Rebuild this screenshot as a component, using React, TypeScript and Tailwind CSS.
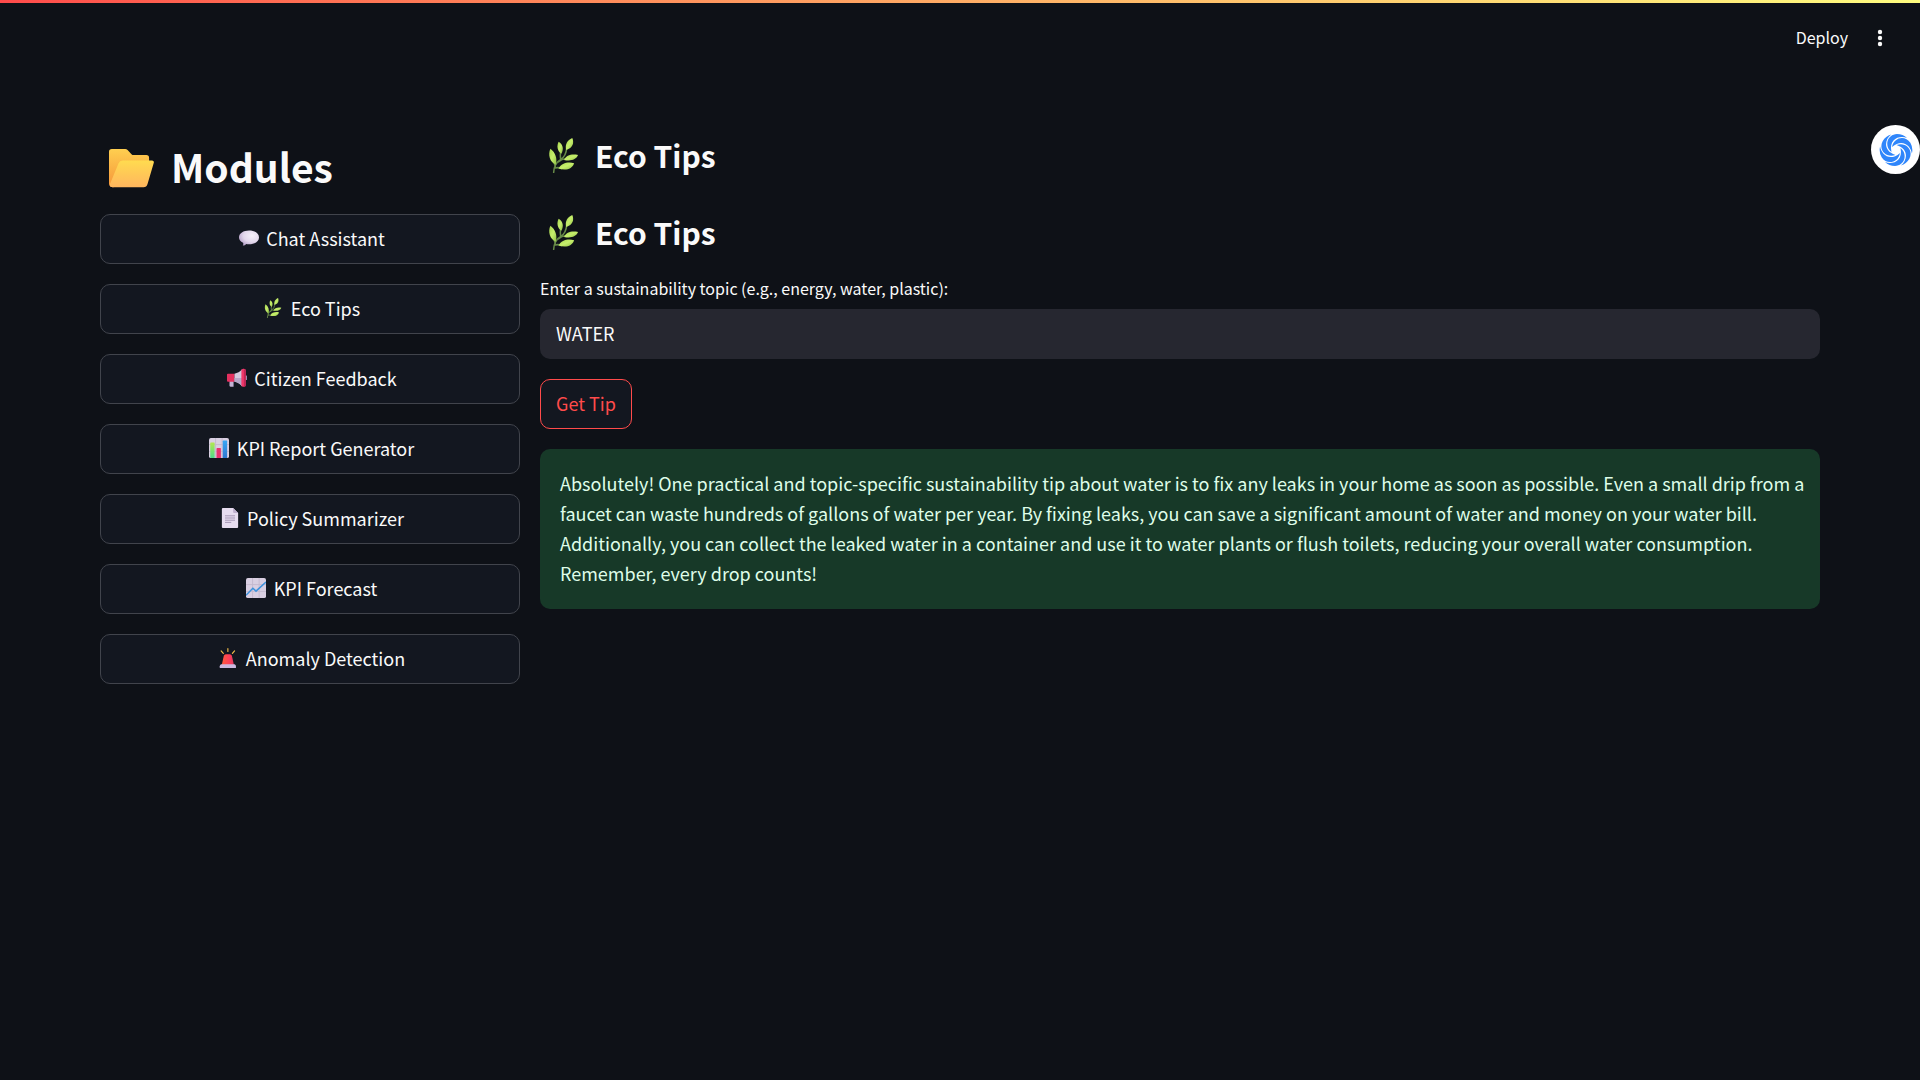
import { useState, type ReactNode } from "react";

function Svg({ className, children }: { className: string; children: ReactNode }) {
  return (
    <svg viewBox="0 0 32 32" className={className} aria-hidden="true">
      {children}
    </svg>
  );
}

function FolderIcon({ className = "size-5" }) {
  return (
    <Svg className={className}>
      <defs>
        <linearGradient id="folder-back" x1="0" y1="0" x2="0" y2="1">
          <stop offset="0" stopColor="#ffcf50" />
          <stop offset="1" stopColor="#f5963a" />
        </linearGradient>
        <linearGradient id="folder-front" x1="0" y1="0" x2="0" y2="1">
          <stop offset="0" stopColor="#ffdb4f" />
          <stop offset="1" stopColor="#ffb65e" />
        </linearGradient>
      </defs>
      <g transform="translate(0 1.500)">
        <path d="M0 4a2 2 0 0 1 2-2h9.500q1 0 1.700.7L16 5.700q.6.700 1.500.7H26.500a2 2 0 0 1 2 2V20L3 29.200Q0 29 0 26.500z" fill="url(#folder-back)" />
        <path d="M6.800 12.200Q7.600 10.200 9.700 10.200H30.600Q32.300 10.200 31.800 12L27.400 27Q26.700 29.300 24.600 29.300H2.500Q0 29.300.7 27z" fill="url(#folder-front)" />
      </g>
    </Svg>
  );
}

function LeafIcon({ className = "size-5" }) {
  return (
    <Svg className={className}>
      <defs>
        <linearGradient id="leaf-fill" x1="0" y1="0" x2="1" y2="1">
          <stop offset="0" stopColor="#a8d84f" />
          <stop offset="0.5" stopColor="#c6ee6c" />
          <stop offset="1" stopColor="#8fbf45" />
        </linearGradient>
      </defs>
      <path
        d="M7 31.500C7 27 9.500 21.500 13.500 19.500C17 17.500 18.500 14 19 9M13.500 19.500C13 17.500 13 15 13.500 12.500M8.500 26C8 24.500 7.500 23.500 7.500 22M11 22Q15 18.500 19 19M8.500 27.500Q11 26.500 14 28"
        fill="none"
        stroke="#678a48"
        strokeWidth="1.400"
        strokeLinecap="round"
      />
      <g fill="url(#leaf-fill)">
        <path d="M24 0C26 4.500 24.500 9 18.500 11C17 6 19.500 2 24 0z" />
        <path d="M11.500 3.500C15.500 6 16.500 10 14 14.500C10.500 12 9.500 8 11.500 3.500z" />
        <path d="M4 9.800C8.500 13 10.500 18.500 9 24.500C3.500 22 1.500 15.500 4 9.800z" />
        <path d="M29.300 15.500C27.500 20 22.500 21.300 16.500 20C18.500 15.500 23.500 14.300 29.300 15.500z" />
        <path d="M25.700 23C24 28.500 18 30 11.500 27.800C14 23 20 21.500 25.700 23z" />
      </g>
    </Svg>
  );
}

function ChatIcon({ className = "size-5" }) {
  return (
    <Svg className={className}>
      <defs>
        <radialGradient id="chat-fill" cx="0.65" cy="0.35" r="0.7">
          <stop offset="0" stopColor="#f6f1fa" />
          <stop offset="0.6" stopColor="#e3d8ec" />
          <stop offset="1" stopColor="#b9a5cb" />
        </radialGradient>
      </defs>
      <path d="M16 4C25 4 32 8.500 32 15S25 26 16 26Q13.500 26 11.500 25.600Q9.500 28.300 6 28Q7.500 26 6.500 23.500Q0 20.500 0 15C0 8.500 7 4 16 4z" fill="url(#chat-fill)" />
    </Svg>
  );
}

function MegaphoneIcon({ className = "size-5" }) {
  return (
    <Svg className={className}>
      <path d="M4 20h6.500v10H6a2 2 0 0 1-2-2z" fill="#c3b2d4" />
      <path d="M1.500 9H12v13H1.500A1.500 1.500 0 0 1 0 20.500v-10A1.500 1.500 0 0 1 1.500 9z" fill="#e5305f" />
      <path d="M12 9Q19 8 24 2V29Q19 23 12 22z" fill="#d3c9df" />
      <path d="M12 16H24V29Q19 23 12 22z" fill="#b6a6c8" />
      <rect x="29" y="12" width="3.500" height="7" rx="1.500" fill="#9c8aae" />
      <rect x="23" y="1" width="7" height="29" rx="3" fill="#f0386a" />
      <rect x="27" y="2" width="3" height="27" rx="1.500" fill="#c02657" />
    </Svg>
  );
}

function ChartSheet() {
  return (
    <>
      <rect width="32" height="32" rx="3" fill="#d9cfe2" />
      <path d="M10.500 0V32M21 0V32M0 10.500H32M0 21.500H32" stroke="#c3b8ce" strokeWidth="1.400" />
    </>
  );
}

function BarChartIcon({ className = "size-5" }) {
  return (
    <Svg className={className}>
      <defs>
        <linearGradient id="bar-green" x1="0" y1="0" x2="0" y2="1">
          <stop offset="0" stopColor="#b4e84f" />
          <stop offset="1" stopColor="#4fd98a" />
        </linearGradient>
        <linearGradient id="bar-blue" x1="0" y1="0" x2="0" y2="1">
          <stop offset="0" stopColor="#39a7f5" />
          <stop offset="1" stopColor="#2f78d0" />
        </linearGradient>
      </defs>
      <ChartSheet />
      <path d="M2 8q0-1 1-1h5q1 0 1 1v24H3q-1 0-1-1z" fill="url(#bar-green)" />
      <path d="M12 17q0-1 1-1h5q1 0 1 1v15h-7z" fill="#e8326f" />
      <path d="M22 5q0-1 1-1h5q1 0 1 1v27h-7z" fill="url(#bar-blue)" />
    </Svg>
  );
}

function PageIcon({ className = "size-5" }) {
  return (
    <Svg className={className}>
      <path d="M4.500 0H21l8 8V30.500Q29 32 27.500 32H4.500Q3 32 3 30.500V1.500Q3 0 4.500 0z" fill="#e6dcef" />
      <path d="M21 0l8 8H22.500Q21 8 21 6.500z" fill="#bfb0ce" />
      <path d="M8 12.500H24M8 16H24M8 19.500H24M8 23H18" stroke="#a597b5" strokeWidth="1.600" />
    </Svg>
  );
}

function TrendIcon({ className = "size-5" }) {
  return (
    <Svg className={className}>
      <ChartSheet />
      <path d="M0 27.500L11 16.500L16 21L32 6.500" fill="none" stroke="#3d92dc" strokeWidth="2.400" />
    </Svg>
  );
}

function SirenIcon({ className = "size-5" }) {
  return (
    <Svg className={className}>
      <defs>
        <linearGradient id="siren-fill" x1="0" y1="0" x2="1" y2="0">
          <stop offset="0" stopColor="#ff5a3c" />
          <stop offset="0.6" stopColor="#ff3f58" />
          <stop offset="1" stopColor="#e0385f" />
        </linearGradient>
      </defs>
      <path d="M15.800 1V5.500M5 4.500L8.500 8.500M26.500 4.500L23 8.500" stroke="#f5c04a" strokeWidth="1.800" strokeLinecap="round" />
      <path d="M12.500 10H19Q21.500 10 22.200 12.500L25.500 27H6L9.300 12.500Q10 10 12.500 10z" fill="url(#siren-fill)" />
      <path d="M5 26H26.500Q28.700 26.500 28.700 29V32H2.800V29Q3 26.500 5 26z" fill="#cbb8e0" />
    </Svg>
  );
}

const ARMS = [0, 60, 120, 180, 240, 300];

function SwirlIcon() {
  return (
    <svg viewBox="-17 -17 34 34" className="size-[34px]" aria-hidden="true">
      <g fill="#2f86fb">
        {ARMS.map((angle) => (
          <path key={angle} transform={`rotate(${angle})`} d="M-4.500 2C-12-4-9-15.500 1-16Q7-16 11-12C4-15-7.500-11.500-4.500 2z" />
        ))}
      </g>
    </svg>
  );
}

const MODULES = [
  { label: "Chat Assistant", Icon: ChatIcon },
  { label: "Eco Tips", Icon: LeafIcon },
  { label: "Citizen Feedback", Icon: MegaphoneIcon },
  { label: "KPI Report Generator", Icon: BarChartIcon },
  { label: "Policy Summarizer", Icon: PageIcon },
  { label: "KPI Forecast", Icon: TrendIcon },
  { label: "Anomaly Detection", Icon: SirenIcon },
];

function SectionHeading() {
  return (
    <h2 className="flex items-center gap-2 pt-3.5 pb-px text-[30px] leading-[42px] font-bold">
      <span className="flex w-[47px] justify-center">
        <LeafIcon className="size-[35px]" />
      </span>
      Eco Tips
    </h2>
  );
}

export default function App() {
  const [topic, setTopic] = useState("WATER");

  return (
    <div className="min-h-screen bg-[#0e1117] font-['Noto_Sans_CJK_SC',sans-serif] text-lg text-[#fafafa]">
      <div className="h-[3px] bg-linear-to-r from-[#ff4b4b] to-[#fffd80]" />
      <header className="flex h-[70px] items-center justify-end gap-4 pr-7">
        <button type="button" className="px-1 pb-0.5 text-base">Deploy</button>
        <button type="button" aria-label="Main menu" className="flex w-6 justify-center">
          <svg viewBox="0 0 6 18" className="h-[18px] w-1.5" fill="#fafafa" aria-hidden="true">
            <circle cx="3" cy="3" r="2.200" />
            <circle cx="3" cy="9" r="2.200" />
            <circle cx="3" cy="15" r="2.200" />
          </svg>
        </button>
      </header>

      <main className="flex items-start gap-5 px-[100px] pt-[47px]">
        <nav className="flex grow basis-[calc(25%-20px)] flex-col gap-5">
          <h1 className="flex items-center gap-2 pt-[19px] pb-px text-[39px] leading-[54px] font-bold">
            <span className="flex w-[63px] justify-center">
              <FolderIcon className="size-[45px]" />
            </span>
            Modules
          </h1>
          {MODULES.map(({ label, Icon }) => (
            <button
              key={label}
              type="button"
              className="flex h-[50px] items-center justify-center gap-1 rounded-[10px] border border-[#41444c] bg-[#131720] pb-0.5"
            >
              <span className="flex w-[27px] justify-center">
                <Icon />
              </span>
              {label}
            </button>
          ))}
        </nav>

        <section className="flex grow basis-[calc(75%-20px)] flex-col gap-5">
          <SectionHeading />
          <SectionHeading />
          <div className="flex flex-col gap-1.5">
            <label htmlFor="topic" className="text-base leading-[29px]">
              Enter a sustainability topic (e.g., energy, water, plastic):
            </label>
            <input
              id="topic"
              type="text"
              value={topic}
              onChange={(event) => setTopic(event.target.value)}
              className="h-[50px] w-full rounded-[10px] bg-[#262730] px-4 pb-0.5 outline-none"
            />
          </div>
          <button
            type="button"
            className="h-[50px] self-start rounded-[10px] border border-[#ff4b4b] bg-[#131720] px-[15px] pb-0.5 text-[#ff4b4b]"
          >
            Get Tip
          </button>
          <p role="alert" className="rounded-[10px] bg-[#173928] pt-[19px] pr-2.5 pb-[21px] pl-5 leading-[30px] text-[#dffde9]">
            Absolutely! One practical and topic-specific sustainability tip about water is to fix any leaks in your
            home as soon as possible. Even a small drip from a faucet can waste hundreds of gallons of water per year.
            By fixing leaks, you can save a significant amount of water and money on your water bill. Additionally, you
            can collect the leaked water in a container and use it to water plants or flush toilets, reducing your
            overall water consumption. Remember, every drop counts!
          </p>
        </section>
      </main>

      <button
        type="button"
        aria-label="Open assistant"
        className="absolute top-[125px] right-0 flex size-[49px] items-center justify-center rounded-full bg-white"
      >
        <SwirlIcon />
      </button>
    </div>
  );
}
